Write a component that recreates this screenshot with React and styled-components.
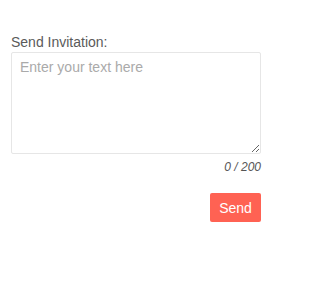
import React, { useState } from "react";
import styled, { createGlobalStyle } from "styled-components";

const Global = createGlobalStyle`
  html, body { margin: 0; padding: 0; background: #fff; }
  body { font-family: "Liberation Sans", Arial, sans-serif; }
`;

const Wrapper = styled.div`
  width: 250px;
  padding: 33px 0 0 11px;
  display: flex;
  flex-direction: column;
`;

const Label = styled.label`
  font-size: 14px;
  color: #5a5a5a;
  line-height: 18px;
  margin-bottom: 1px;
`;

const TextArea = styled.textarea`
  box-sizing: border-box;
  width: 250px;
  height: 102px;
  border: 1px solid #e6e6e6;
  border-radius: 2px;
  padding: 6px 8px;
  font-family: "Liberation Sans", Arial, sans-serif;
  font-size: 14px;
  color: #333;
  outline: none;
  margin: 0;
  &::placeholder { color: #aaa; }
`;

const Counter = styled.div`
  align-self: flex-end;
  margin-right: 0;
  font-size: 12px;
  font-style: italic;
  color: #555;
  line-height: 14px;
  margin-top: 6px;
`;

const SendButton = styled.button`
  align-self: flex-end;
  margin-top: 19px;
  margin-right: 0;
  width: 51px;
  height: 29px;
  border: none;
  border-radius: 2px;
  background: #ff6253;
  color: #fff;
  font-family: "Liberation Sans", Arial, sans-serif;
  font-size: 14px;
  cursor: pointer;
`;

export default function App() {
  const [text, setText] = useState("");
  return (
    <>
      <Global />
      <Wrapper>
        <Label>Send Invitation:</Label>
        <TextArea
          placeholder="Enter your text here"
          value={text}
          maxLength={200}
          onChange={(e) => setText(e.target.value)}
        />
        <Counter>{text.length} / 200</Counter>
        <SendButton>Send</SendButton>
      </Wrapper>
    </>
  );
}
